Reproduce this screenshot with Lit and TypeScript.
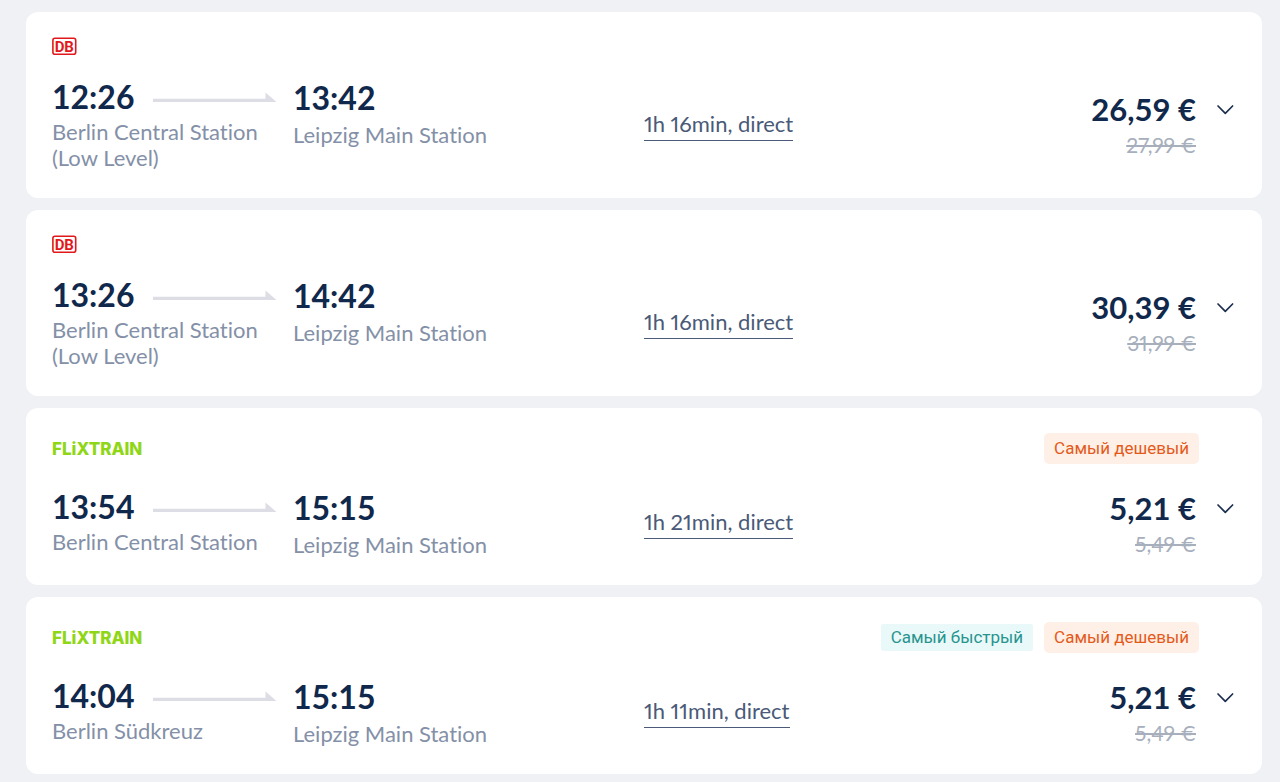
import { LitElement, html, css, nothing } from "lit";
import { customElement, property } from "lit/decorators.js";

interface Trip {
  carrier: "db" | "flix";
  depart: string;
  from: string;
  arrive: string;
  to: string;
  duration: string;
  price: string;
  oldPrice: string;
  fastest?: boolean;
  cheapest?: boolean;
}

const TRIPS: Trip[] = [
  { carrier: "db", depart: "12:26", from: "Berlin Central Station (Low Level)", arrive: "13:42", to: "Leipzig Main Station", duration: "1h 16min, direct", price: "26,59 €", oldPrice: "27,99 €" },
  { carrier: "db", depart: "13:26", from: "Berlin Central Station (Low Level)", arrive: "14:42", to: "Leipzig Main Station", duration: "1h 16min, direct", price: "30,39 €", oldPrice: "31,99 €" },
  { carrier: "flix", depart: "13:54", from: "Berlin Central Station", arrive: "15:15", to: "Leipzig Main Station", duration: "1h 21min, direct", price: "5,21 €", oldPrice: "5,49 €", cheapest: true },
  { carrier: "flix", depart: "14:04", from: "Berlin Südkreuz", arrive: "15:15", to: "Leipzig Main Station", duration: "1h 11min, direct", price: "5,21 €", oldPrice: "5,49 €", fastest: true, cheapest: true },
];

@customElement("carrier-logo")
export class CarrierLogo extends LitElement {
  @property() carrier = "db";

  static styles = css`
    :host { display: block; }
    .db { display: block; overflow: visible; }
    .db-text { font: bold 15px Roboto, "Noto Sans", sans-serif; fill: #e2191c; }
    .flix { font: 800 17px/19px Inter, sans-serif; color: #8fd716; }
  `;

  render() {
    return this.carrier === "db"
      ? html`<svg class="db" width="25" height="18" viewBox="0 0 25 18" role="img" aria-label="DB">
          <rect x="0.9" y="1.2" width="22.800" height="16" rx="2" fill="#fff" stroke="#e2191c" stroke-width="1.6" />
          <text class="db-text" x="12.3" y="14.500" text-anchor="middle">DB</text>
        </svg>`
      : html`<div class="flix">FLiXTRAIN</div>`;
  }
}

@customElement("trip-card")
export class TripCard extends LitElement {
  @property({ attribute: false }) trip!: Trip;

  static styles = css`
    :host { display: block; background: #fff; border-radius: 12px; padding: 25px 28px 27px 26px; font-variant-ligatures: none; }
    .header { display: flex; align-items: center; justify-content: space-between; padding-right: 35px; margin-bottom: 27px; min-height: 17px; }
    .logo { height: 17px; }
    .badges { display: flex; align-items: center; gap: 11px; }
    .badge { font: 17px/27px Roboto, sans-serif; padding: 0 10px; white-space: nowrap; }
    .fastest { background: #e9f9f9; color: #27948f; border-radius: 2px; }
    .cheapest { background: #fff0e7; color: #e45a1b; border-radius: 5px; line-height: 31px; }
    .body { display: grid; grid-template-columns: 241px 351fr 590fr; }
    .stop-top { display: flex; align-items: center; justify-content: space-between; padding-right: 16px; }
    .time { font-size: 32px; line-height: 32px; font-weight: 700; color: #10284b; }
    .station { margin-top: 6px; padding-right: 24px; font-size: 22px; line-height: 26px; color: #8490a7; }
    .arrival { padding-top: 1px; }
    .arrival .station { margin-top: 8px; padding-right: 0; }
    .arrow { display: block; }
    .offer { display: flex; align-items: center; justify-content: space-between; }
    .duration { margin-bottom: 3px; padding-bottom: 1px; border-bottom: 1px solid #4a5a78; color: #4a5a78; font-size: 22px; line-height: 30px; font-variant-numeric: proportional-nums; text-decoration: none; white-space: nowrap; }
    .price-row { display: flex; align-items: center; justify-content: flex-end; gap: 20px; height: 32px; }
    .price { font-size: 31px; line-height: 32px; font-weight: 700; color: #10284b; white-space: nowrap; }
    .old { display: block; margin: 6px 38px 0 0; text-align: right; font-size: 21px; line-height: 28px; font-variant-numeric: proportional-nums; color: #a7afbd; }
    .toggle { display: block; width: 18px; height: 18px; padding: 0; border: 0; background: none; cursor: pointer; }
    .chevron { display: block; }
  `;

  render() {
    const t = this.trip;
    return html`
      <div class="header">
        <carrier-logo class="logo" .carrier=${t.carrier}></carrier-logo>
        <div class="badges">
          ${t.fastest ? html`<span class="badge fastest">Самый быстрый</span>` : nothing}
          ${t.cheapest ? html`<span class="badge cheapest">Самый дешевый</span>` : nothing}
        </div>
      </div>
      <div class="body">
        <div>
          <div class="stop-top">
            <div class="time">${t.depart}</div>
            <svg class="arrow" width="124" height="14" viewBox="0 0 124 14" aria-hidden="true">
              <path d="M0 8.800H112.500V2.500L123.500 12H0Z" fill="#dddee5" />
            </svg>
          </div>
          <div class="station">${t.from}</div>
        </div>
        <div class="arrival">
          <div class="time">${t.arrive}</div>
          <div class="station">${t.to}</div>
        </div>
        <div class="offer">
          <a class="duration" href="#">${t.duration}</a>
          <div>
            <div class="price-row">
              <span class="price">${t.price}</span>
              <button class="toggle" type="button" aria-label=${t.depart}>
                <svg class="chevron" width="18" height="18" viewBox="0 0 18 18" fill="none" stroke="#1d2f4f" stroke-width="1.7" stroke-linecap="round" stroke-linejoin="round">
                  <path d="M2 6L9.300 13.300L16.600 6" />
                </svg>
              </button>
            </div>
            <s class="old">${t.oldPrice}</s>
          </div>
        </div>
      </div>
    `;
  }
}

@customElement("app-root")
export class AppRoot extends LitElement {
  static styles = css`
    :host { display: block; box-sizing: border-box; min-height: 100vh; background: #eff1f5; font-family: Lato, "Open Sans", sans-serif; }
    .list { display: flex; flex-direction: column; gap: 12px; padding: 12px 18px 8px 26px; }
  `;

  render() {
    return html`<main class="list">${TRIPS.map((t) => html`<trip-card .trip=${t}></trip-card>`)}</main>`;
  }
}
